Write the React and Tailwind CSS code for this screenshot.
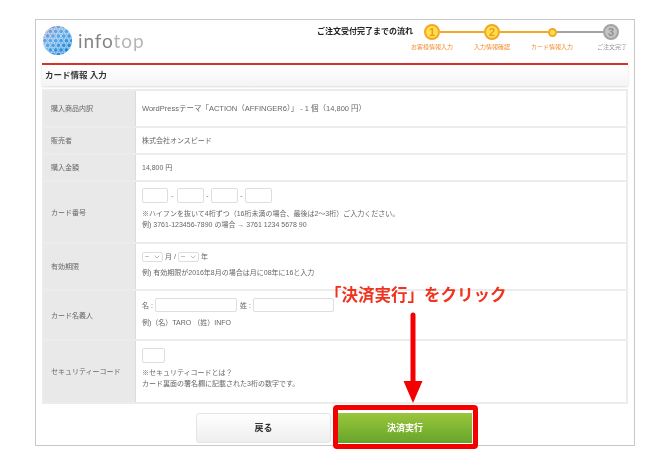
import { ChevronDown } from "lucide-react";

const FONT = "font-['Helvetica','Liberation_Sans','Noto_Sans_CJK_JP',sans-serif]";

function Logo() {
  // globe made of a hex mesh, lighter towards the top left
  const cells = [];
  for (let row = 0; row < 7; row++) {
    for (let col = 0; col < 7; col++) {
      cells.push([col * 7.4 + (row % 2 ? 3.7 : 0) - 1, row * 6.4 + 1]);
    }
  }
  return (
    <div className="flex items-center gap-[6px]">
      <svg width="29" height="29" viewBox="0 0 40 40">
        <defs>
          <linearGradient id="globe" x1="0.1" y1="0" x2="0.8" y2="1">
            <stop offset="0" stopColor="#8496cc" />
            <stop offset="0.45" stopColor="#5aa6e6" />
            <stop offset="1" stopColor="#0f7fd6" />
          </linearGradient>
          <clipPath id="ball">
            <circle cx="20" cy="20" r="20" />
          </clipPath>
        </defs>
        <circle cx="20" cy="20" r="20" fill="url(#globe)" />
        <g clipPath="url(#ball)" fill="none" stroke="#fff" strokeOpacity="0.8" strokeWidth="1">
          {cells.map(([x, y], i) => (
            <circle key={i} cx={x} cy={y} r="3.2" />
          ))}
        </g>
      </svg>
      <div className="text-[19px] leading-none tracking-[0.9px] font-['Lato',sans-serif] text-[#858585]">
        info<span className="text-[#b5b5b5]">top</span>
      </div>
    </div>
  );
}

function Circle({ n, active }) {
  return (
    <div
      className={`w-[16px] h-[16px] shrink-0 rounded-full border-2 flex items-center justify-center text-[11px] font-bold leading-none ${
        active
          ? "border-[#f5a623] bg-[#ffe14d] text-[#f09a1a]"
          : "border-[#a3a3a3] bg-[#c4c4c4] text-[#8f8f8f]"
      }`}
    >
      {n}
    </div>
  );
}

function Steps() {
  const labels = [
    ["お客様情報入力", "text-[#f08a2c]"],
    ["入力情報確認", "text-[#f08a2c]"],
    ["カード情報入力", "text-[#f08a2c]"],
    ["ご注文完了", "text-[#999]"],
  ];
  return (
    <div className="flex flex-col w-[240px]">
      <div className="flex items-center pl-[22px]">
        <Circle n="1" active />
        <div className="w-[44px] h-[2px] bg-[#f5a623]" />
        <Circle n="2" active />
        <div className="w-[48px] h-[2px] bg-[#f5a623]" />
        <div className="w-[9px] h-[9px] shrink-0 rounded-full border-2 border-[#f5a623] bg-[#ffe14d]" />
        <div className="w-[46px] h-[2px] bg-[#a3a3a3]" />
        <Circle n="3" />
      </div>
      <div className="flex mt-[3px]">
        {labels.map(([text, color]) => (
          <div key={text} className={`w-[60px] text-center text-[6px] leading-[8px] whitespace-nowrap ${color}`}>
            {text}
          </div>
        ))}
      </div>
    </div>
  );
}

function Row({ label, h, pt, children, last }) {
  return (
    <div className={`flex ${h} ${last ? "" : "border-b-2 border-[#ececec]"}`}>
      <div className="w-[92px] shrink-0 flex items-center pl-[7px] bg-[#e9e9e9] border-r border-[#dcdcdc] whitespace-nowrap">
        {label}
      </div>
      <div className={`flex-1 pl-[6px] flex flex-col ${pt || "justify-center"}`}>{children}</div>
    </div>
  );
}

function TextBox({ w, h = "h-[15px]" }) {
  return <input type="text" className={`${w} ${h} bg-white border border-[#dedede] rounded-[2px] shrink-0`} />;
}

function MonthSelect() {
  return (
    <div className="w-[21px] h-[10px] border border-[#dedede] rounded-[2px] flex items-center justify-between pl-[2px] pr-[1px] text-[6px]">
      <span>--</span>
      <ChevronDown size={8} strokeWidth={1.5} className="text-[#777]" />
    </div>
  );
}

export default function App() {
  return (
    <div className={`relative w-[668px] h-[469px] bg-white overflow-hidden text-[#666] text-[7px] leading-[11px] blur-[0.3px] ${FONT}`}>
      <div className="ml-[35px] mt-[19px] w-[600px] h-[427px] border border-[#c8c8c8] px-[6px]">
        {/* Header */}
        <div className="h-[43px] flex items-start justify-between">
          <div className="pt-[6px] pl-[1px]">
            <Logo />
          </div>
          <div className="flex items-start pt-[4px] -mr-[14px]">
            <div className="pt-[3px] -mr-[11px] text-[8px] leading-[10px] font-bold text-[#222] whitespace-nowrap">
              ご注文受付完了までの流れ
            </div>
            <Steps />
          </div>
        </div>

        {/* Section title */}
        <div className="h-[23px] border-t-2 border-[#d8302e] bg-gradient-to-b from-white to-[#f4f4f4] shadow-[0_1px_2px_#ddd] flex items-center pl-[3px] text-[8.5px] font-bold text-[#333]">
          カード情報 入力
        </div>

        {/* Form table */}
        <div className="mt-[3px] border-2 border-[#ececec] flex flex-col">
          <Row label="購入商品内訳" h="h-[37px]">
            <div className="text-[7.5px] whitespace-nowrap">WordPressテーマ「ACTION（AFFINGER6）」 - 1 個（14,800 円）</div>
          </Row>
          <Row label="販売者" h="h-[27px]">
            <div>株式会社オンスピード</div>
          </Row>
          <Row label="購入金額" h="h-[27px]">
            <div>14,800 円</div>
          </Row>
          <Row label="カード番号" h="h-[62px]" pt="pt-[6px]">
            <div className="flex items-center gap-[2px]">
              <TextBox w="w-[26px]" />
              <span className="w-[5px] text-center">-</span>
              <TextBox w="w-[27px]" />
              <span className="w-[3px] text-center">-</span>
              <TextBox w="w-[27px]" />
              <span className="w-[3px] text-center">-</span>
              <TextBox w="w-[27px]" />
            </div>
            <div className="mt-[5px] whitespace-nowrap">※ハイフンを抜いて4桁ずつ（16桁未満の場合、最後は2〜3桁）ご入力ください。</div>
            <div className="whitespace-nowrap">例) 3761-123456-7890 の場合 → 3761 1234 5678 90</div>
          </Row>
          <Row label="有効期限" h="h-[47px]" pt="pt-[7px]">
            <div className="flex items-center gap-[2px]">
              <MonthSelect />
              <span>月 /</span>
              <MonthSelect />
              <span>年</span>
            </div>
            <div className="mt-[5px] whitespace-nowrap">例) 有効期限が2016年8月の場合は月に08年に16と入力</div>
          </Row>
          <Row label="カード名義人" h="h-[50px]" pt="pt-[7px]">
            <div className="flex items-center">
              <span className="w-[13px]">名 :</span>
              <TextBox w="w-[82px]" h="h-[14px]" />
              <span className="ml-[3px] w-[13px]">姓 :</span>
              <TextBox w="w-[81px]" h="h-[14px]" />
            </div>
            <div className="mt-[5px] whitespace-nowrap">例)（名）TARO （姓）INFO</div>
          </Row>
          <Row label="セキュリティーコード" h="h-[61px]" pt="pt-[7px]" last>
            <TextBox w="w-[23px]" />
            <div className="mt-[4px] whitespace-nowrap">※セキュリティコードとは？</div>
            <div className="whitespace-nowrap">カード裏面の署名欄に記載された3桁の数字です。</div>
          </Row>
        </div>

        {/* Buttons */}
        <div className="mt-[9px] flex gap-[7px] pl-[154px]">
          <button className="w-[135px] h-[30px] rounded-[3px] border border-[#e4e4e4] bg-gradient-to-b from-white to-[#eeeeee] text-[9px] font-bold text-[#333]">
            戻る
          </button>
          <button className="w-[134px] h-[30px] bg-gradient-to-b from-[#9ac63c] to-[#66a52a] text-[9px] font-bold text-white">
            決済実行
          </button>
        </div>
      </div>

      {/* Red annotation drawn over the page */}
      <div className="absolute left-[325px] top-[285px] text-[16.5px] leading-[20px] font-bold text-[#f0321e] whitespace-nowrap">
        「決済実行」をクリック
      </div>
      <svg className="absolute left-[400px] top-[312px]" width="26" height="94" viewBox="0 0 26 94">
        <path d="M13 3V72" stroke="#f50000" strokeWidth="5" strokeLinecap="round" />
        <path d="M3.5 69H22.5L13 91Z" fill="#f50000" />
      </svg>
      <div className="absolute left-[333px] top-[405px] w-[145px] h-[44px] border-[5px] border-[#f50000] rounded-[4px]" />
    </div>
  );
}
